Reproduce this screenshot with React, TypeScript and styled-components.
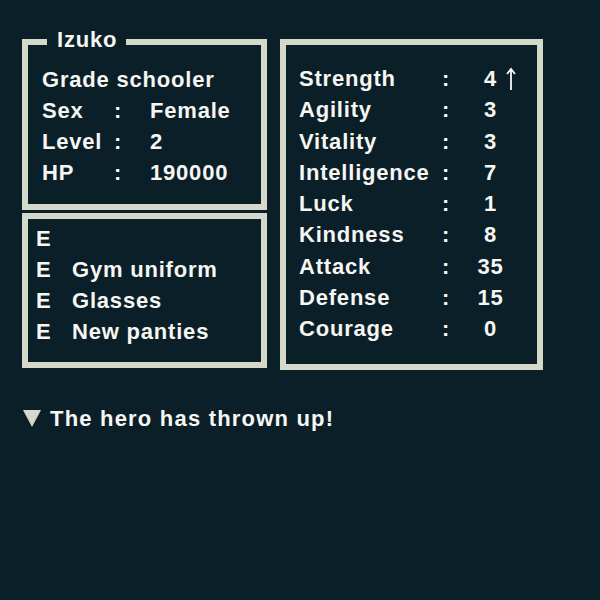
import React from "react";
import styled, { createGlobalStyle } from "styled-components";

const GlobalStyle = createGlobalStyle`
  html, body {
    margin: 0;
    padding: 0;
    background: #0b1f29;
  }
  body {
    font-family: "Liberation Sans", Arial, sans-serif;
    font-weight: bold;
    font-size: 22px;
    letter-spacing: 0.8px;
    color: #f6f6f2;
  }
`;

const Screen = styled.div`
  width: 600px;
  height: 600px;
  box-sizing: border-box;
  padding: 39px 0 0 22px;
`;

const Windows = styled.div`
  display: grid;
  grid-template-columns: 245px 263px;
  column-gap: 13px;
  align-items: start;
`;

const Column = styled.div`
  display: flex;
  flex-direction: column;
  gap: 3px;
`;

const Panel = styled.div<{ $height: number }>`
  position: relative;
  box-sizing: border-box;
  height: ${(p) => p.$height}px;
  border: 6px solid #d5d9c9;
  background: #0b1f29;
`;

const Title = styled.div`
  position: absolute;
  top: -21px;
  left: 19px;
  padding: 0 9px 0 10px;
  line-height: 31px;
  background: #0b1f29;
`;

const Rows = styled.div<{ $cols: string; $pad: string; $line?: number }>`
  display: grid;
  grid-template-columns: ${(p) => p.$cols};
  grid-auto-rows: ${(p) => p.$line ?? 31}px;
  line-height: ${(p) => p.$line ?? 31}px;
  padding: ${(p) => p.$pad};
  white-space: nowrap;
`;

const Wide = styled.div`
  grid-column: 1 / -1;
`;

const Value = styled.div<{ $center?: boolean }>`
  text-align: ${(p) => (p.$center ? "center" : "left")};
`;

const Mark = styled.div`
  display: flex;
  align-items: center;
`;

const Message = styled.div`
  display: flex;
  align-items: center;
  gap: 9px;
  margin-top: 33px;
  line-height: 31px;
  letter-spacing: 1.2px;
  padding-left: 1px;
`;

const UpArrow = () => (
  <svg width="10" height="24" viewBox="0 0 10 24">
    <path d="M5 2 V23 M1 7 L5 2 L9 7" stroke="#f6f6f2" strokeWidth="1.8" fill="none" />
  </svg>
);

const Cursor = () => (
  <svg width="18" height="17" viewBox="0 0 18 17">
    <polygon points="0,0 18,0 9,17" fill="#d5d9c9" />
  </svg>
);

const stats: [string, string, boolean?][] = [
  ["Strength", "4", true],
  ["Agility", "3"],
  ["Vitality", "3"],
  ["Intelligence", "7"],
  ["Luck", "1"],
  ["Kindness", "8"],
  ["Attack", "35"],
  ["Defense", "15"],
  ["Courage", "0"],
];

const gear = ["", "Gym uniform", "Glasses", "New panties"];

export default function App() {
  return (
    <>
      <GlobalStyle />
      <Screen>
        <Windows>
          <Column>
            <Panel $height={171}>
              <Title>Izuko</Title>
              <Rows $cols="72px 36px auto" $pad="19px 0 0 14px">
                <Wide>Grade schooler</Wide>
                <div>Sex</div>
                <div>:</div>
                <div>Female</div>
                <div>Level</div>
                <div>:</div>
                <div>2</div>
                <div>HP</div>
                <div>:</div>
                <div>190000</div>
              </Rows>
            </Panel>
            <Panel $height={155}>
              <Rows $cols="36px auto" $pad="4px 0 0 8px">
                {gear.map((g, i) => (
                  <React.Fragment key={i}>
                    <div>E</div>
                    <div>{g}</div>
                  </React.Fragment>
                ))}
              </Rows>
            </Panel>
          </Column>
          <Panel $height={331}>
            <Rows $cols="143px 33px 31px 12px" $pad="18px 0 0 13px" $line={31.25}>
              {stats.map(([name, val, up]) => (
                <React.Fragment key={name}>
                  <div>{name}</div>
                  <div>:</div>
                  <Value $center>{val}</Value>
                  <Mark>{up && <UpArrow />}</Mark>
                </React.Fragment>
              ))}
            </Rows>
          </Panel>
        </Windows>
        <Message>
          <Cursor />
          <span>The hero has thrown up!</span>
        </Message>
      </Screen>
    </>
  );
}
